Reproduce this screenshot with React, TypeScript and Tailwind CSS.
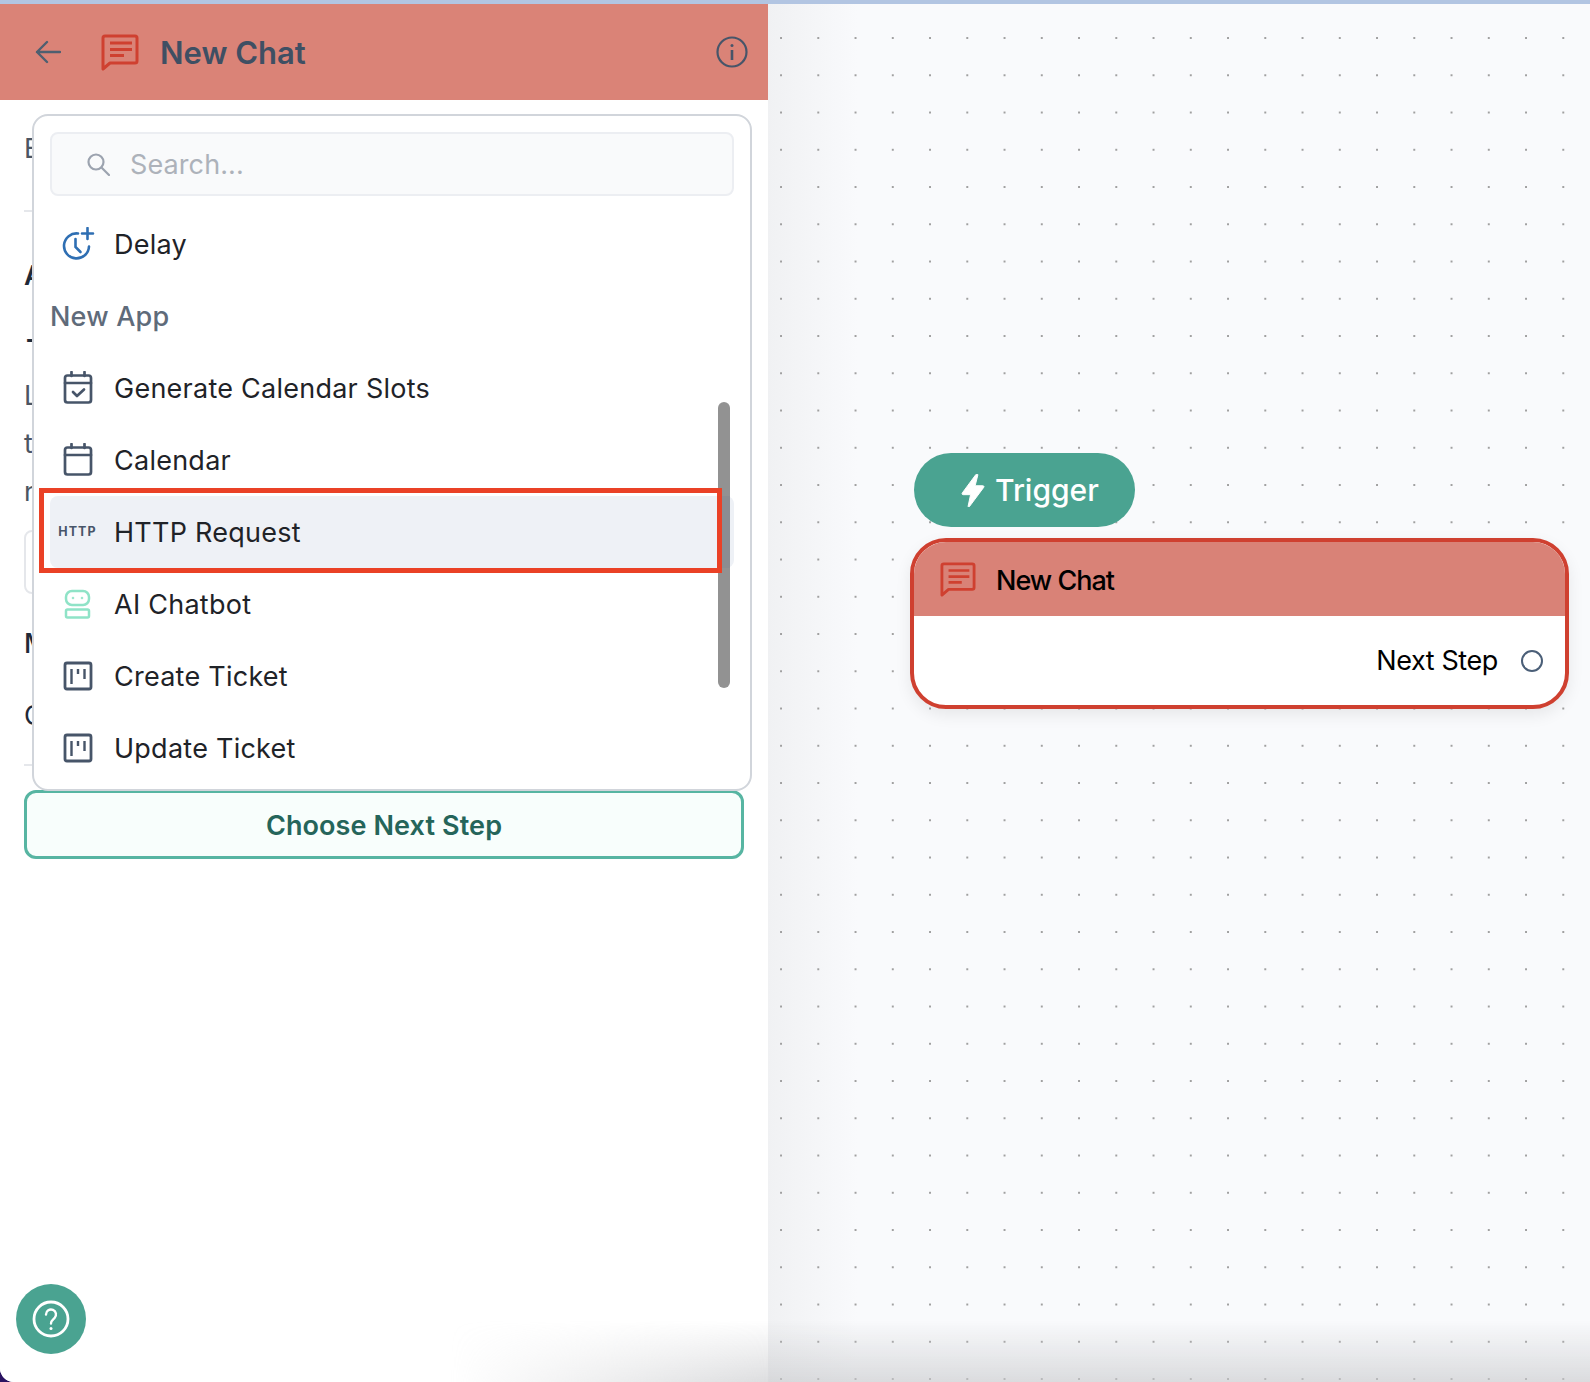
import React from "react";

const ChatIcon = ({ className }: { className: string }) => (
  <svg viewBox="0 0 38 37" fill="none" className={className}>
    <path d="M2 4a2 2 0 0 1 2-2h30a2 2 0 0 1 2 2v23a2 2 0 0 1-2 2H9l-7 6z" stroke="#cf4030" strokeWidth="3" strokeLinejoin="round" />
    <path d="M9 9h22M9 15.5h22M9 21.5h14" stroke="#cf4030" strokeWidth="2.8" />
  </svg>
);

const DelayIcon = () => (
  <svg viewBox="0 0 34 34" fill="none" className="w-[34px] h-[34px]" stroke="#2f6fb3" strokeWidth="2.6" strokeLinecap="round">
    <path d="M17 6.5A12.5 12.5 0 1 0 28 19.5" />
    <path d="M14.5 12v8l5 5" />
    <path d="M26.5 1v11M21 6.5h11" />
  </svg>
);

const CalCheckIcon = () => (
  <svg viewBox="0 0 30 34" fill="none" className="w-[30px] h-[34px]" stroke="#475569" strokeWidth="2.7" strokeLinecap="round" strokeLinejoin="round">
    <rect x="2" y="4.5" width="26" height="27" rx="2.5" />
    <path d="M2 12h26M8.5 1v4M21.5 1v4" />
    <path d="M10 21l4 4 7-6.500" />
  </svg>
);

const CalIcon = () => (
  <svg viewBox="0 0 30 34" fill="none" className="w-[30px] h-[34px]" stroke="#475569" strokeWidth="2.7" strokeLinecap="round" strokeLinejoin="round">
    <rect x="2" y="4.5" width="26" height="27" rx="2.500" />
    <path d="M2 12h26M8.500 1v4M21.500 1v4" />
  </svg>
);

const BotIcon = () => (
  <svg viewBox="0 0 28 30" fill="none" className="w-[28px] h-[30px]" stroke="#8fe3c7" strokeWidth="2.500">
    <rect x="2" y="2" width="23" height="14" rx="6" />
    <rect x="2" y="20.500" width="23" height="8" rx="1.500" />
    <circle cx="9" cy="9" r="1" fill="#8fe3c7" strokeWidth="0.500" />
    <circle cx="18" cy="9" r="1" fill="#8fe3c7" strokeWidth="0.500" />
  </svg>
);

const TicketIcon = () => (
  <svg viewBox="0 0 30 30" fill="none" className="w-[30px] h-[30px]" stroke="#475569" strokeWidth="2.800" strokeLinejoin="round">
    <rect x="2" y="2" width="26" height="26" rx="2" />
    <path d="M8.500 8v15M15 8v5M21.500 8v10" strokeWidth="2.400" />
  </svg>
);

const Row = ({ icon, label, active }: { icon: React.ReactNode; label: string; active?: boolean }) => (
  <div className={`h-[72px] flex items-center rounded-lg ${active ? "bg-[#eef1f6]" : ""}`}>
    <div className="w-[64px] flex justify-center items-center shrink-0 pr-[9px]">{icon}</div>
    <span className="text-[27px] text-[#1f2328] tracking-[0.25px] translate-y-[1px]">{label}</span>
  </div>
);

export default function App() {
  return (
    <div className="relative w-[1590px] h-[1382px] overflow-hidden bg-[#2a1261] font-['Inter',sans-serif]">
      <div className="h-[4px] bg-[#b2c5e2]" />
      <div className="relative flex h-[1378px] rounded-bl-[14px] overflow-hidden bg-white">
        {/* Sidebar */}
        <aside className="relative w-[768px] shrink-0 bg-white">
          <header className="h-[96px] bg-[#da8377] flex items-center pl-[35px] pr-[20px]">
            <svg viewBox="0 0 26 24" fill="none" className="w-[26px] h-[24px]" stroke="#4e5f70" strokeWidth="2.400" strokeLinecap="round" strokeLinejoin="round">
              <path d="M25 12H2M12 2L2 12l10 10" />
            </svg>
            <ChatIcon className="w-[38px] h-[37px] ml-[40px]" />
            <h1 className="ml-[21px] text-[31px] font-semibold text-[#3f4f63] translate-y-[1px]">New Chat</h1>
            <svg viewBox="0 0 32 32" fill="none" className="w-[32px] h-[32px] ml-auto" stroke="#475569" strokeWidth="2.200">
              <circle cx="16" cy="16" r="14.500" />
              <path d="M16 14v10" strokeWidth="2.600" />
              <circle cx="16" cy="9.500" r="1.500" fill="#475569" stroke="none" />
            </svg>
          </header>

          <div className="px-[24px] text-[27px] text-[#374151] whitespace-nowrap">
            <div className="mt-[33px] leading-[32px] text-[#4b5563]">Event</div>
            <div className="mt-[45px] h-[2px] w-[700px] bg-[#e5e7eb]" />
            <div className="mt-[48px] leading-[32px] font-semibold text-[#1f2937]">Action</div>
            <div className="mt-[42px] ml-[2px] leading-[32px] font-semibold text-[#1f2937]">Trigger</div>
            <div className="mt-[6px] leading-[48px] text-[#4b5563]">
              <div>Listens</div>
              <div>to</div>
              <div>new</div>
            </div>
            <div className="mt-[14px] h-[64px] w-[720px] rounded-lg border-2 border-[#e5e7eb]" />
            <div className="mt-[34px] leading-[32px] font-medium text-[#1f2937]">Message</div>
            <div className="mt-[40px] leading-[32px] text-[#1f2937]">Conversation</div>
            <div className="mt-[32px] h-[2px] w-[700px] bg-[#e5e7eb]" />
            <button className="mt-[24px] h-[69px] w-[720px] rounded-xl border-[3px] border-[#57b5a2] bg-[#f8fefc] text-[27px] tracking-[0.1px] font-semibold text-[#25655a]">
              <span className="inline-block translate-y-[2px]">Choose Next Step</span>
            </button>
          </div>

          {/* Dropdown menu */}
          <div className="absolute left-[32px] top-[110px] w-[720px] h-[677px] rounded-[16px] border-2 border-[#d1d5db] bg-white px-[16px] pt-[16px]">
            <div className="h-[64px] mb-[12px] rounded-lg border-2 border-[#eceef2] bg-[#f9fafb] flex items-center pl-[34px]">
              <svg viewBox="0 0 24 24" fill="none" className="w-[24px] h-[24px]" stroke="#9ca3af" strokeWidth="2.200" strokeLinecap="round">
                <circle cx="10" cy="10" r="7.500" />
                <path d="M15.500 15.500L23 23" />
              </svg>
              <span className="ml-[20px] text-[27px] tracking-[0.1px] text-[#adb2ba] translate-y-[1px]">Search...</span>
            </div>
            <Row icon={<DelayIcon />} label="Delay" />
            <div className="h-[72px] flex items-center text-[27px] tracking-[0.2px] font-medium text-[#5f6b7a] translate-y-[1px]">New App</div>
            <Row icon={<CalCheckIcon />} label="Generate Calendar Slots" />
            <Row icon={<CalIcon />} label="Calendar" />
            <Row icon={<span className="text-[12.500px] font-bold tracking-[1.100px] text-[#475569]">HTTP</span>} label="HTTP Request" active />
            <Row icon={<BotIcon />} label="AI Chatbot" />
            <Row icon={<TicketIcon />} label="Create Ticket" />
            <Row icon={<TicketIcon />} label="Update Ticket" />

            {/* Scrollbar thumb */}
            <div className="absolute left-[684px] top-[286px] w-[12px] h-[286px] rounded-full bg-[#929292]">
              <div className="absolute left-0 top-[94px] w-full h-[72px] bg-[#8b8d91]" />
            </div>
            {/* Annotation box */}
            <div className="absolute left-[5px] top-[372px] w-[683px] h-[85px] border-[5px] border-[#ea4126]" />
          </div>

          {/* Help */}
          <button className="absolute left-[16px] top-[1280px] w-[70px] h-[70px] rounded-full bg-[#4aa391] flex items-center justify-center">
            <svg viewBox="0 0 38 38" fill="none" className="w-[38px] h-[38px]" stroke="#fff" strokeWidth="2.800" strokeLinecap="round">
              <circle cx="19" cy="19" r="17" />
              <path d="M14 14.500a5 5 0 1 1 8.500 3.600c-1.700 1.600-3.500 2.900-3.500 5.400" strokeWidth="2.400" />
              <circle cx="19" cy="28.500" r="1.500" fill="#fff" stroke="none" />
            </svg>
          </button>
        </aside>

        {/* Canvas */}
        <main className="relative flex-1 bg-[linear-gradient(to_right,#f0f1f3,#f9fafc_90px)]">
          <div className="absolute inset-0 bg-[radial-gradient(circle,#a0a0a0_1.200px,transparent_1.500px)] bg-[size:37.250px_37.250px] bg-[position:-5.600px_15.400px]" />

          <div className="absolute left-[146px] top-[449px] w-[221px] h-[74px] rounded-full bg-[#4aa391] flex items-center pl-[47px]">
            <svg viewBox="0 0 24 34" className="w-[24px] h-[33px]" fill="#fff">
              <path d="M15 0.500L1 19.500c-.6.900-.2 1.800 1 1.800h7.500L7 33c-.2 1 .7 1.300 1.300.6L23 13.800c.6-.8.2-1.700-.9-1.700h-7.900L17 1c.2-1-1.300-1.400-2-.5z" stroke="#fff" strokeWidth="1" />
            </svg>
            <span className="ml-[10px] text-[30px] font-medium text-white">Trigger</span>
          </div>

          <div className="absolute left-[142px] top-[534px] w-[659px] h-[171px] rounded-[36px] border-[4px] border-[#cf4030] bg-white overflow-hidden shadow-[0_6px_16px_rgba(0,0,0,0.08)]">
            <div className="h-[74px] bg-[#d98277] flex items-center pl-[26px]">
              <ChatIcon className="w-[36px] h-[35px]" />
              <span className="ml-[20px] text-[27px] font-medium text-black tracking-[-1px] translate-y-[2px]">New Chat</span>
            </div>
            <div className="h-[89px] flex items-center justify-end pr-[22px]">
              <span className="text-[27px] text-black tracking-[-0.4px] translate-y-[1px]">Next Step</span>
              <span className="ml-[23px] w-[22px] h-[22px] rounded-full border-2 border-[#4b5f78] bg-white" />
            </div>
          </div>
        </main>

        {/* Bottom fade of the window */}
        <div className="absolute right-0 bottom-0 w-[1140px] h-[62px] pointer-events-none bg-gradient-to-t from-[rgba(200,201,204,0.62)] to-transparent [mask-image:linear-gradient(to_right,transparent,black_320px)]" />
      </div>
    </div>
  );
}
